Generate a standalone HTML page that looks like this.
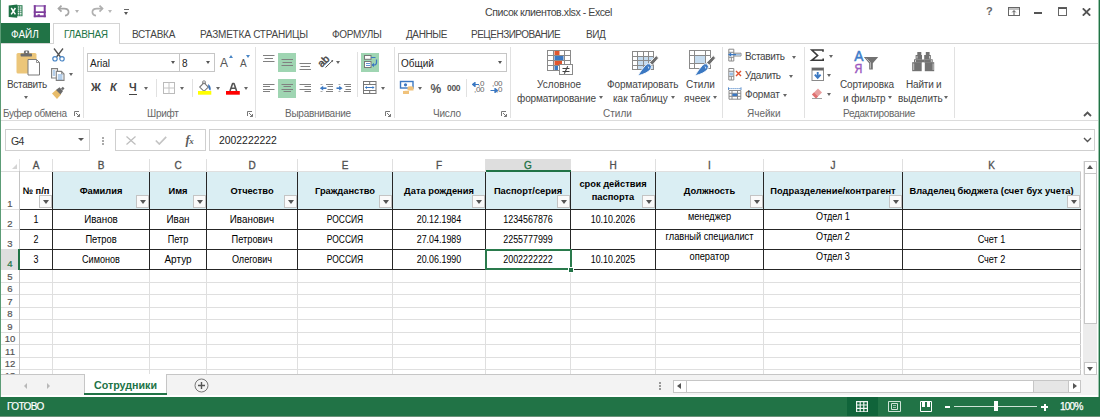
<!DOCTYPE html>
<html><head><meta charset="utf-8">
<style>
*{margin:0;padding:0;box-sizing:border-box}
html,body{width:1100px;height:417px;overflow:hidden;background:#fff;font-family:"Liberation Sans",sans-serif;color:#444}
.a{position:absolute}
.t{position:absolute;white-space:nowrap;line-height:1}
.vs{position:absolute;width:1px;background:#e1e1e1}
.arr{position:absolute;width:0;height:0;border-left:2.5px solid transparent;border-right:2.5px solid transparent;border-top:3px solid #666}
.gl{position:absolute;background:#dfdfdf}
.cell{position:absolute;text-align:center;white-space:nowrap;font-size:9px;color:#000}
.flt{position:absolute;width:13px;height:13px;background:#fafafa;border:1px solid #c4c4c4}
.flt:after{content:"";position:absolute;left:3px;top:4px;border-left:3px solid transparent;border-right:3px solid transparent;border-top:4px solid #555}
</style></head><body>
<!-- window green borders -->
<div class="a" style="left:0;top:0;width:1px;height:397px;background:#5c9c76;z-index:5"></div>
<div class="a" style="left:1098px;top:0;width:1px;height:397px;background:#9cc5ad;z-index:5"></div><div class="a" style="left:1099px;top:0;width:1px;height:397px;background:#217346;z-index:5"></div>

<!-- TITLE BAR -->
<div id="title">
 <!-- excel icon -->
 <svg class="a" style="left:8px;top:4px" width="15" height="14" viewBox="8 4 15 14">
  <rect x="16.5" y="5.2" width="6" height="11" fill="#2a7d50"/>
  <g fill="#e6f0ea">
   <rect x="17.8" y="6.3" width="1.5" height="1.4"/><rect x="20" y="6.3" width="1.5" height="1.4"/>
   <rect x="17.8" y="8.4" width="1.5" height="1.4"/><rect x="20" y="8.4" width="1.5" height="1.4"/>
   <rect x="17.8" y="10.5" width="1.5" height="1.4"/><rect x="20" y="10.5" width="1.5" height="1.4"/>
   <rect x="17.8" y="12.6" width="1.5" height="1.4"/><rect x="20" y="12.6" width="1.5" height="1.4"/>
   <rect x="17.8" y="14.4" width="1.5" height="1"/><rect x="20" y="14.4" width="1.5" height="1"/>
  </g>
  <path d="M8.7 5.4 L17.2 4.5 V17.8 L8.7 16.9 Z" fill="#1e7145"/>
  <path d="M11.2 8 L15.4 14.3 M15.4 8 L11.2 14.3" stroke="#fff" stroke-width="1.5"/>
 </svg>
 <!-- save icon -->
 <svg class="a" style="left:33px;top:5px" width="13" height="13" viewBox="0 0 13 13" fill="#7e3d9c">
  <rect x="0.8" y="0.2" width="12" height="1.5" fill="#9a6bb8"/>
  <rect x="0.8" y="0.2" width="2" height="12"/>
  <rect x="10.7" y="0.2" width="2" height="12"/>
  <rect x="0.8" y="10.3" width="12" height="1.9"/>
  <rect x="0.8" y="6.3" width="12" height="1.7"/>
  <rect x="4.6" y="9.3" width="2.3" height="2"/>
 </svg>
 <!-- undo -->
 <svg class="a" style="left:56px;top:4px" width="16" height="14" viewBox="56 4 16 14">
  <path d="M58.8 8.6H64 Q68.6 8.6 68.6 12 Q68.6 15 65 15.6" fill="none" stroke="#a6a6a6" stroke-width="1.7"/>
  <path d="M61.5 5.6L58.5 8.6L61.5 11.6" fill="none" stroke="#a6a6a6" stroke-width="1.7"/>
 </svg>
 <div class="arr" style="left:75px;top:10px;border-top-color:#b0b0b0"></div>
 <!-- redo -->
 <svg class="a" style="left:90px;top:4px" width="16" height="14" viewBox="90 4 16 14">
  <path d="M102.5 8.6H97 Q92.4 8.6 92.4 12 Q92.4 15 96 15.6" fill="none" stroke="#b0b0b0" stroke-width="1.7"/>
  <path d="M99.5 5.6L102.5 8.6L99.5 11.6" fill="none" stroke="#b0b0b0" stroke-width="1.7"/>
 </svg>
 <div class="arr" style="left:108px;top:10px;border-top-color:#b8b8b8"></div>
 <!-- customize -->
 <div class="a" style="left:123.5px;top:9px;width:5px;height:1.2px;background:#666"></div>
 <div class="arr" style="left:123.5px;top:11.5px;border-left-width:2.5px;border-right-width:2.5px;border-top-width:3px;border-top-color:#555"></div>
 <div class="t" style="left:485px;top:7px;font-size:10.6px;color:#444;letter-spacing:-0.45px">Список клиентов.xlsx - Excel</div>
 <!-- help ? -->
 <div class="t" style="left:986px;top:6px;font-size:11px;font-weight:bold;color:#666">?</div>
 <svg class="a" style="left:1008px;top:7px" width="12" height="9" viewBox="0 0 12 9">
  <rect x="0.5" y="0.5" width="11" height="8" fill="none" stroke="#666" stroke-width="1"/>
  <path d="M1 2H11" stroke="#666" stroke-width="0.8"/>
  <path d="M6 8V3.8M4.3 5.3L6 3.6L7.7 5.3" fill="none" stroke="#555" stroke-width="1"/>
 </svg>
 <div class="a" style="left:1034px;top:12px;width:8px;height:2px;background:#555"></div>
 <svg class="a" style="left:1058px;top:7px" width="9" height="9" viewBox="0 0 9 9">
  <rect x="0.5" y="0.5" width="8" height="8" fill="none" stroke="#666" stroke-width="1"/>
  <rect x="0.5" y="0.5" width="8" height="1.5" fill="#555"/>
 </svg>
 <svg class="a" style="left:1082px;top:8px" width="9" height="8" viewBox="0 0 9 8">
  <path d="M0.8 0.3L8.2 7.7M8.2 0.3L0.8 7.7" stroke="#555" stroke-width="1.8"/>
 </svg>
</div>

<!-- TABS -->
<div id="tabs">
 <div class="a" style="left:0;top:23px;width:50px;height:20px;background:#217346"></div>
 <div class="t" style="left:11px;top:30px;font-size:10px;color:#fff">ФАЙЛ</div>
 <div class="a" style="left:53px;top:23px;width:67px;height:21px;border:1px solid #d4d4d4;border-bottom:none;background:#fff;z-index:2"></div>
 <div class="t" style="left:64px;top:30px;font-size:10px;color:#217346;letter-spacing:-0.3px;z-index:3">ГЛАВНАЯ</div>
 <div class="t" style="left:132px;top:30px;font-size:10px;color:#444;letter-spacing:-0.25px">ВСТАВКА</div>
 <div class="t" style="left:200px;top:30px;font-size:10px;color:#444;letter-spacing:-0.2px">РАЗМЕТКА СТРАНИЦЫ</div>
 <div class="t" style="left:332px;top:30px;font-size:10px;color:#444;letter-spacing:-0.3px">ФОРМУЛЫ</div>
 <div class="t" style="left:406px;top:30px;font-size:10px;color:#444;letter-spacing:-0.4px">ДАННЫЕ</div>
 <div class="t" style="left:471px;top:30px;font-size:10px;color:#444;letter-spacing:-0.5px">РЕЦЕНЗИРОВАНИЕ</div>
 <div class="t" style="left:586px;top:30px;font-size:10px;color:#444;letter-spacing:-0.4px">ВИД</div>
 <div class="a" style="left:0;top:43px;width:1098px;height:1px;background:#d4d4d4"></div>
</div>

<!-- RIBBON -->
<div id="ribbon">
 <div class="a" style="left:1px;top:120px;width:1097px;height:1px;background:#dcdcdc"></div>
 <!-- separators -->
 <div class="vs" style="left:83px;top:47px;height:71px"></div>
 <div class="vs" style="left:255px;top:47px;height:71px"></div>
 <div class="vs" style="left:394px;top:47px;height:71px"></div>
 <div class="vs" style="left:510px;top:47px;height:71px"></div>
 <div class="vs" style="left:722px;top:47px;height:71px"></div>
 <div class="vs" style="left:804px;top:47px;height:71px"></div>
 <div class="vs" style="left:954px;top:47px;height:71px"></div>
 <!-- group labels -->
 <div class="t" style="left:3px;top:109px;font-size:10px;color:#666;letter-spacing:-0.35px">Буфер обмена</div>
 <div class="t" style="left:147px;top:109px;font-size:10px;color:#666;letter-spacing:-0.25px">Шрифт</div>
 <div class="t" style="left:285px;top:109px;font-size:10px;color:#666;letter-spacing:-0.25px">Выравнивание</div>
 <div class="t" style="left:433px;top:109px;font-size:10px;color:#666;letter-spacing:-0.2px">Число</div>
 <div class="t" style="left:603px;top:109px;font-size:10px;color:#666">Стили</div>
 <div class="t" style="left:747px;top:109px;font-size:10px;color:#666">Ячейки</div>
 <div class="t" style="left:843px;top:109px;font-size:10px;color:#666;letter-spacing:-0.3px">Редактирование</div>
 <!-- launchers -->
 <svg class="a" style="left:74px;top:111px" width="6" height="6" viewBox="0 0 6 6"><path d="M0.5 5V0.5H5" fill="none" stroke="#777" stroke-width="1"/><path d="M2 2L5.5 5.5M5.5 3V5.5H3" fill="none" stroke="#777" stroke-width="1"/></svg>
 <svg class="a" style="left:247px;top:111px" width="6" height="6" viewBox="0 0 6 6"><path d="M0.5 5V0.5H5" fill="none" stroke="#777" stroke-width="1"/><path d="M2 2L5.5 5.5M5.5 3V5.5H3" fill="none" stroke="#777" stroke-width="1"/></svg>
 <svg class="a" style="left:385px;top:111px" width="6" height="6" viewBox="0 0 6 6"><path d="M0.5 5V0.5H5" fill="none" stroke="#777" stroke-width="1"/><path d="M2 2L5.5 5.5M5.5 3V5.5H3" fill="none" stroke="#777" stroke-width="1"/></svg>
 <svg class="a" style="left:501px;top:111px" width="6" height="6" viewBox="0 0 6 6"><path d="M0.5 5V0.5H5" fill="none" stroke="#777" stroke-width="1"/><path d="M2 2L5.5 5.5M5.5 3V5.5H3" fill="none" stroke="#777" stroke-width="1"/></svg>

 <!-- CLIPBOARD -->
 <svg class="a" style="left:16px;top:50px" width="25" height="26" viewBox="0 0 25 26">
  <rect x="0.5" y="3" width="20" height="20.5" rx="1.5" fill="#ecc67a"/>
  <rect x="4.6" y="3.6" width="11.4" height="2.8" rx="0.6" fill="#6d6d6d"/>
  <rect x="7.9" y="0.6" width="5.3" height="3.6" rx="1.4" fill="#6d6d6d"/>
  <circle cx="10.55" cy="2.2" r="0.9" fill="#fff"/>
  <path d="M12 9.5 H20.5 L23.5 12.5 V25 H12 Z" fill="#fff" stroke="#7a7a7a" stroke-width="1"/>
  <path d="M20.5 9.5 V12.5 H23.5" fill="none" stroke="#7a7a7a" stroke-width="0.8"/>
 </svg>
 <div class="t" style="left:7px;top:80px;font-size:10px;color:#444;letter-spacing:-0.3px">Вставить</div>
 <div class="arr" style="left:24px;top:96px"></div>
 <!-- scissors -->
 <svg class="a" style="left:52px;top:48px" width="13" height="14" viewBox="0 0 13 14">
  <path d="M2 0.5 L8.5 9 M11 0.5 L4.5 9" stroke="#555" stroke-width="1.3"/>
  <circle cx="3" cy="10.8" r="2.2" fill="none" stroke="#4a86c5" stroke-width="1.2"/>
  <circle cx="10" cy="10.8" r="2.2" fill="none" stroke="#4a86c5" stroke-width="1.2"/>
 </svg>
 <!-- copy -->
 <svg class="a" style="left:50px;top:67px" width="16" height="15" viewBox="50 67 16 15">
  <path d="M51.6 68.6H57.5V78H51.6Z" fill="#fff" stroke="#808080" stroke-width="1.1"/>
  <path d="M52.8 71H55.2M52.8 73H55.2M52.8 75H55.2" stroke="#5b94d0" stroke-width="0.9"/>
  <path d="M56.3 71.4H61.5L64 73.9V80.4H56.3Z" fill="#fff" stroke="#808080" stroke-width="1.1"/>
  <path d="M61.5 71.4V73.9H64" fill="none" stroke="#808080" stroke-width="0.8"/>
  <path d="M57.8 75H62.5M57.8 77H62.5M57.8 79H62.5" stroke="#5b94d0" stroke-width="0.9"/>
 </svg>
 <div class="arr" style="left:69px;top:73px"></div>
 <!-- format painter -->
 <svg class="a" style="left:50px;top:86px" width="16" height="15" viewBox="50 86 16 15">
  <path d="M52 93.5 L56.5 89.5 L61 94.5 L57 99 Z" fill="#e8bc6a"/>
  <path d="M56 90 L59.5 87.3 L63 91 L60.5 94.5 Z" fill="#6a6a6a"/>
  <path d="M61 88.5 L62.8 86.8 L64.5 88.5 L62.8 90.3 Z" fill="#6a6a6a"/>
 </svg>
 <!-- FONT -->
 <div class="a" style="left:87px;top:53px;width:128px;height:19px;border:1px solid #c6c6c6;background:#fff"></div>
 <div class="a" style="left:179px;top:54px;width:1px;height:17px;background:#c6c6c6"></div>
 <div class="t" style="left:90px;top:58.5px;font-size:10px;color:#222">Arial</div>
 <div class="arr" style="left:171px;top:61px;border-top-color:#555"></div>
 <div class="t" style="left:182px;top:58.5px;font-size:10px;color:#222">8</div>
 <div class="arr" style="left:206px;top:61px;border-top-color:#555"></div>
 <div class="t" style="left:220px;top:57px;font-size:12px;color:#555">A</div>
 <div class="a" style="left:229px;top:55px;border-left:2px solid transparent;border-right:2px solid transparent;border-bottom:3px solid #4a86c5"></div>
 <div class="t" style="left:240px;top:59px;font-size:10px;color:#555">A</div>
 <div class="a" style="left:246px;top:55px;border-left:2px solid transparent;border-right:2px solid transparent;border-top:3px solid #4a86c5"></div>
 <div class="t" style="left:91px;top:82px;font-size:11px;font-weight:bold;color:#444">Ж</div>
 <div class="t" style="left:110px;top:82px;font-size:11px;font-weight:bold;font-style:italic;color:#444">К</div>
 <div class="t" style="left:129px;top:82px;font-size:11px;font-weight:bold;color:#444">Ч</div>
 <div class="a" style="left:129px;top:94px;width:8px;height:1px;background:#444"></div>
 <div class="arr" style="left:144px;top:87px"></div>
 <div class="vs" style="left:156px;top:79px;height:18px"></div>
 <svg class="a" style="left:163px;top:82px" width="12" height="12" viewBox="0 0 12 12">
  <rect x="0.5" y="0.5" width="11" height="11" fill="none" stroke="#bbb" stroke-width="1"/>
  <path d="M6 0.5V11.5M0.5 6H11.5" stroke="#c4c4c4" stroke-width="1"/>
 </svg>
 <div class="arr" style="left:180px;top:87px"></div>
 <div class="vs" style="left:192px;top:79px;height:18px"></div>
 <svg class="a" style="left:196px;top:79px" width="50" height="17" viewBox="196 79 50 17">
  <path d="M204 82.8 L208.3 87.1 L204 91.3 L199.7 87.1 Z" fill="#fff" stroke="#777" stroke-width="1.1"/>
  <path d="M202.5 85 V82.2 Q202.5 80.8 204 80.8 Q205.5 80.8 205.5 82.2 V85" fill="none" stroke="#888" stroke-width="1"/>
  <path d="M208 84 Q211.5 86 210.5 90.5 Q209 90 208.5 88 Z" fill="#3b73b9"/>
  <rect x="198" y="91" width="13.3" height="3.7" fill="#ffff00"/>
  <path d="M230 91 L232.6 83.5 H234 L236.6 91 M231.3 88.2 H235.3" fill="none" stroke="#555" stroke-width="1.6" stroke-linejoin="bevel"/>
  <rect x="226" y="91" width="13.8" height="3.7" fill="#ff0000"/>
 </svg>
 <div class="arr" style="left:216px;top:87px"></div>
 <div class="arr" style="left:244px;top:87px"></div>

 <!-- ALIGNMENT -->
 <div class="a" style="left:278px;top:53px;width:18px;height:19px;background:#9fd5b2"></div>
 <div class="a" style="left:278px;top:79px;width:18px;height:19px;background:#9fd5b2"></div>
 <div class="a" style="left:361px;top:53px;width:18px;height:19px;background:#9fd5b2"></div>
 <svg class="a" style="left:262px;top:53px" width="140" height="46" viewBox="262 53 140 46">
  <g stroke="#808080" stroke-width="1">
   <path d="M263 55.5H274.5M264.5 58.5H273M263 61.5H274.5"/>
   <path d="M281.5 59.5H293M282.5 62.5H292M281.5 65.5H293"/>
   <path d="M299.5 63.5H311M300.5 66.5H310M299.5 69.5H311"/>
   <path d="M263 84.5H274.5M263 86.5H270M263 89.5H274.5M263 91.5H270"/>
   <path d="M281.5 84.5H293M283.5 86.5H291M281.5 89.5H293M283.5 91.5H291"/>
   <path d="M299.5 84.5H311M304.5 86.5H311M299.5 89.5H311M304.5 91.5H311"/>
   <path d="M326 84.5H333M327.5 86.5H333M327.5 89.5H333M326 91.5H333"/>
   <path d="M344 84.5H351M345.5 86.5H351M345.5 89.5H351M344 91.5H351"/>
   <path d="M320.5 84.5H322.5M320.5 91.5H322.5M338.5 84.5H340.5M338.5 91.5H340.5" stroke="#aaa"/>
   <path d="M325.5 67.5L333 60.2" stroke="#555"/>
  </g>
  <path d="M319.8 88.2 L323.2 85.8 V90.6 Z" fill="#3b78c2"/><path d="M322.5 88.2H326.5" stroke="#3b78c2" stroke-width="1.6"/>
  <path d="M342.6 88.2 L339.2 85.8 V90.6 Z" fill="#3b78c2"/><path d="M336.5 88.2H340" stroke="#3b78c2" stroke-width="1.6"/>
  <path d="M333.2 60 l-2.2 0.4 l1.8 1.8Z" fill="#666"/>
  <text x="0" y="0" font-family="Liberation Sans" font-size="10.5" fill="#4a4a4a" stroke="#4a4a4a" stroke-width="0.45" transform="translate(321.8 67.8) rotate(-45)">ab</text>
  <g stroke="#777" stroke-width="1" fill="#fff">
   <rect x="364.5" y="55.5" width="6.5" height="3.8"/>
   <rect x="364.5" y="61.5" width="6.5" height="6"/>
   <rect x="363.5" y="81.5" width="12.5" height="12"/>
  </g>
  <path d="M371 57.5H375.5" stroke="#3b78c2" stroke-width="1"/>
  <path d="M366 63.5H370M366 65.5H370" stroke="#3b78c2" stroke-width="0.8"/>
  <path d="M376.5 59.5 V62.5 Q376.5 65 374 65 H372" fill="none" stroke="#3b78c2" stroke-width="1.2"/>
  <path d="M371.5 65 L374 62.8 V67.2Z" fill="#3b78c2"/>
  <path d="M363.5 84.5H376M363.5 90.5H376M369.7 81.5V84.5M369.7 90.5V93.5" stroke="#777" stroke-width="1"/>
  <path d="M365.5 87.5H374" stroke="#3b78c2" stroke-width="1"/>
  <path d="M365 87.5L367 86V89Z M374.5 87.5L372.5 86V89Z" fill="#3b78c2"/>
 </svg>
 <div class="arr" style="left:336px;top:61px"></div>
 <div class="arr" style="left:381px;top:87px"></div>
 <div class="vs" style="left:357px;top:52px;height:45px"></div>

 <!-- NUMBER -->
 <div class="a" style="left:398px;top:53px;width:109px;height:19px;border:1px solid #c6c6c6;background:#fff"></div>
 <div class="t" style="left:401px;top:58.5px;font-size:10px;color:#222">Общий</div>
 <div class="arr" style="left:498px;top:61px;border-top-color:#555"></div>
 <svg class="a" style="left:399px;top:80px" width="16" height="15" viewBox="0 0 16 15">
  <rect x="1.5" y="1.5" width="12.5" height="6.5" fill="none" stroke="#3b78c2" stroke-width="1.4"/>
  <circle cx="6.5" cy="4.8" r="1.6" fill="#3b78c2"/>
  <ellipse cx="11.5" cy="7.5" rx="3" ry="1.3" fill="#f0c27b"/>
  <rect x="8.5" y="7.5" width="6" height="3" fill="#f0c27b"/>
  <ellipse cx="7" cy="12" rx="3" ry="1.3" fill="#f0c27b"/>
  <rect x="4" y="11" width="6" height="3" fill="#f0c27b"/>
 </svg>
 <div class="arr" style="left:418px;top:87px"></div>
 <div class="t" style="left:430.5px;top:82.5px;font-size:12px;font-weight:bold;color:#585858">%</div>
 <div class="t" style="left:447px;top:84px;font-size:8.5px;font-weight:bold;color:#555;letter-spacing:-0.3px">000</div>
 <div class="vs" style="left:466px;top:79px;height:18px"></div>
 <div class="t" style="left:478px;top:80px;font-size:8px;color:#666;letter-spacing:-0.3px">,0</div>
 <div class="t" style="left:474px;top:86px;font-size:8px;color:#666;letter-spacing:-0.3px">,00</div>
 <svg class="a" style="left:472px;top:82px" width="8" height="5" viewBox="0 0 8 5"><path d="M0.5 2.5 L3 0.5 V4.5Z M2.5 2.5H7" fill="#3b78c2" stroke="#3b78c2" stroke-width="1.2"/></svg>
 <div class="t" style="left:492px;top:80px;font-size:8px;color:#666;letter-spacing:-0.3px">,00</div>
 <div class="t" style="left:496px;top:86px;font-size:8px;color:#666;letter-spacing:-0.3px">,0</div>
 <svg class="a" style="left:490px;top:88px" width="8" height="5" viewBox="0 0 8 5"><path d="M7.5 2.5 L5 0.5 V4.5Z M0.5 2.5H5.5" fill="#3b78c2" stroke="#3b78c2" stroke-width="1.2"/></svg>

 <!-- STYLES -->
 <svg class="a" style="left:540px;top:46px" width="180" height="32" viewBox="540 46 180 32">
  <!-- cond fmt -->
  <g fill="none" stroke="#8a8a8a" stroke-width="1">
   <rect x="547.5" y="50.5" width="23" height="20"/>
   <path d="M548 55.5H570.5M548 60.5H570.5M548 65.5H570.5M553.5 50.5V70.5M564.5 50.5V70.5"/>
  </g>
  <rect x="554.5" y="51" width="5" height="4" fill="#e0562e"/>
  <rect x="554.5" y="56" width="9" height="4" fill="#3b78c2"/>
  <rect x="554.5" y="61" width="7.5" height="4" fill="#e0562e"/>
  <rect x="554.5" y="66" width="3.5" height="4" fill="#3b78c2"/>
  <rect x="559.5" y="64.5" width="13" height="10" fill="#fff" stroke="#8a8a8a" stroke-width="1"/>
  <path d="M562.5 68.5H569.5M562.5 71.5H569.5M564.3 73.8L567.7 66.2" stroke="#444" stroke-width="1.1"/>
  <!-- format as table -->
  <rect x="638" y="56.5" width="15.5" height="13" fill="#c5dcf0"/>
  <g fill="none" stroke="#8a8a8a" stroke-width="1">
   <rect x="632.5" y="51.5" width="21" height="18"/>
   <path d="M632.5 56.5H653.5M632.5 60.5H653.5M632.5 65.5H653.5M637.5 51.5V69.5M643.5 51.5V69.5M648.5 51.5V69.5"/>
  </g>
  <path d="M656.2 55.6 L658.6 58 L652.4 65.2 L649.6 62.6 Z" fill="#6d6d6d" stroke="#fff" stroke-width="0.9"/>
  <path d="M649.8 63.8 Q652.6 66.2 650.8 69 Q647.5 73.5 637.8 75.8 Q642 69 645.2 65.6 Q647.6 63 649.8 63.8Z" fill="#3b78c2" stroke="#fff" stroke-width="0.9"/>
  <path d="M647.8 66.5 Q649.2 67.2 648.6 68.4" fill="none" stroke="#fff" stroke-width="0.9"/>
  <!-- cell styles -->
  <rect x="694.5" y="55" width="11" height="9" fill="#c5dcf0"/>
  <g fill="none" stroke="#8a8a8a" stroke-width="1">
   <rect x="689.5" y="50.5" width="21" height="18"/>
   <path d="M689.5 55.5H710.5M689.5 63.5H710.5M694.5 50.5V68.5M705.5 50.5V68.5"/>
  </g>
  <path d="M713.2 55.6 L715.6 58 L709.4 65.2 L706.6 62.6 Z" fill="#6d6d6d" stroke="#fff" stroke-width="0.9"/>
  <path d="M706.8 63.8 Q709.6 66.2 707.8 69 Q704.5 73.5 694.8 75.8 Q699 69 702.2 65.6 Q704.6 63 706.8 63.8Z" fill="#3b78c2" stroke="#fff" stroke-width="0.9"/>
  <path d="M704.8 66.5 Q706.2 67.2 705.6 68.4" fill="none" stroke="#fff" stroke-width="0.9"/>
 </svg>
 <div class="t" style="left:537px;top:80px;font-size:10px;color:#444">Условное</div>
 <div class="t" style="left:517px;top:93.5px;font-size:10px;color:#444;letter-spacing:-0.1px">форматирование</div>
 <div class="arr" style="left:599px;top:96px"></div>
 <div class="t" style="left:607px;top:80px;font-size:10px;color:#444;letter-spacing:-0.1px">Форматировать</div>
 <div class="t" style="left:613px;top:93.5px;font-size:10px;color:#444">как таблицу</div>
 <div class="arr" style="left:670.5px;top:96px"></div>
 <div class="t" style="left:686px;top:80px;font-size:10px;color:#444">Стили</div>
 <div class="t" style="left:684px;top:93.5px;font-size:10px;color:#444">ячеек</div>
 <div class="arr" style="left:712.5px;top:96px"></div>

 <!-- CELLS -->
 <svg class="a" style="left:726px;top:47px" width="18" height="54" viewBox="726 47 18 54">
  <g fill="none" stroke="#8a8a8a" stroke-width="1">
   <path d="M728.8 49.2H733.8V61H728.8Z M728.8 52.3H733.8 M728.8 57.3H733.8 M731.3 57.3V61"/>
   <path d="M733.8 53.2H741V56H733.8"/>
   <path d="M728.8 68.5H733.8V80H728.8Z M728.8 71.3H733.8 M728.8 76.3H733.8 M731.3 76.3V80"/>
   <path d="M729 90.5H740.8V99.2H729Z M729 93.3H740.8M729 96.3H740.8M732 90.5V99.2M737.5 90.5V99.2"/>
  </g>
  <rect x="735" y="54" width="5.5" height="1.4" fill="#9cc0e6"/>
  <path d="M731 54.6H736" stroke="#3b78c2" stroke-width="1.3"/>
  <path d="M728 54.6L731.2 52.4V56.8Z" fill="#3b78c2"/>
  <rect x="729.5" y="72.5" width="3.5" height="3" fill="#9cc0e6"/>
  <path d="M736 71L741 76M741 71L736 76" stroke="#e0502e" stroke-width="1.4"/>
  <rect x="732.3" y="93.6" width="5" height="2.5" fill="#3b78c2"/>
  <path d="M728.5 88.6H741" stroke="#3b78c2" stroke-width="0.9" stroke-dasharray="1.2 0.8"/>
  <path d="M728.5 87.3V90M741 87.3V90" stroke="#3b78c2" stroke-width="0.8"/>
 </svg>
 <div class="t" style="left:745px;top:52px;font-size:10px;color:#444;letter-spacing:-0.35px">Вставить</div>
 <div class="arr" style="left:792px;top:56px"></div>
 <div class="t" style="left:745px;top:71px;font-size:10px;color:#444;letter-spacing:-0.35px">Удалить</div>
 <div class="arr" style="left:789px;top:75px"></div>
 <div class="t" style="left:745px;top:90px;font-size:10px;color:#444;letter-spacing:-0.15px">Формат</div>
 <div class="arr" style="left:783px;top:94px"></div>

 <!-- EDITING -->
 <svg class="a" style="left:808px;top:47px" width="140" height="54" viewBox="808 47 140 54">
  <path d="M823 51.8V50H811.8L817.6 55.5L811.8 60.3H823.2V58.6" fill="none" stroke="#3a3a3a" stroke-width="1.6"/>
  <rect x="812" y="68" width="11.5" height="12.5" fill="#fff" stroke="#8a8a8a" stroke-width="1"/>
  <rect x="812" y="68" width="11.5" height="2.5" fill="#666"/>
  <path d="M817.7 72V77M814.8 74.6L817.7 77.8L820.6 74.6" fill="none" stroke="#3b78c2" stroke-width="1.9"/>
  <path d="M812 94.5 L818 88.5 L822 92.5 L816 98.5 Z" fill="#e8a0a0"/>
  <path d="M812 94.5 L814 92.5 L818 96.5 L816 98.5 Z" fill="#e07070"/>
  <path d="M812 98.5H822" stroke="#888" stroke-width="0.8"/>
  <text x="854.2" y="61.2" font-family="Liberation Sans" font-size="13.8" fill="#3d7cc9" stroke="#3d7cc9" stroke-width="0.5">A</text>
  <text x="0" y="0" font-family="Liberation Sans" font-size="13.5" fill="#9b59c0" stroke="#9b59c0" stroke-width="0.5" transform="translate(854.6 72.8) scale(0.8 1)">Я</text>
  <path d="M863.8 57H878.2L872.8 63.2V69.6H869.2V63.2Z" fill="#727272"/><path d="M866.5 58.5L870.5 62.5V68.5" fill="none" stroke="#c8c8c8" stroke-width="0.8"/>
  <g fill="#727272">
   <rect x="917.3" y="52" width="4" height="3.2"/><rect x="925.8" y="52" width="3.8" height="3.2"/>
   <rect x="915.6" y="55" width="6.4" height="4.5"/><rect x="924.2" y="55" width="6.6" height="4.5"/>
   <rect x="914" y="59.3" width="8" height="3.2"/><rect x="924.2" y="59.3" width="8.5" height="3.2"/>
   <rect x="921.5" y="59.5" width="3" height="2.8"/>
   <rect x="912.2" y="62.2" width="9.5" height="9"/><rect x="924.8" y="62.2" width="9.4" height="9"/>
  </g>
  <g fill="#c8c8c8">
   <rect x="913.2" y="63.5" width="1" height="6.5"/><rect x="932.6" y="63.5" width="1" height="6.5"/>
   <rect x="915" y="60" width="1" height="2"/><rect x="930.8" y="60" width="1" height="2"/>
   <rect x="916.5" y="56" width="1" height="2.5"/><rect x="929" y="56" width="1" height="2.5"/>
  </g>
 </svg>
 <div class="arr" style="left:829px;top:55px"></div>
 <div class="arr" style="left:827px;top:74px"></div>
 <div class="arr" style="left:827px;top:93px"></div>
 <div class="t" style="left:840px;top:80px;font-size:10px;color:#444;letter-spacing:-0.1px">Сортировка</div>
 <div class="t" style="left:843px;top:93.5px;font-size:10px;color:#444">и фильтр</div>
 <div class="arr" style="left:887.5px;top:96px"></div>
 <div class="t" style="left:906px;top:80px;font-size:10px;color:#444;letter-spacing:-0.2px">Найти и</div>
 <div class="t" style="left:898px;top:93.5px;font-size:10px;color:#444">выделить</div>
 <div class="arr" style="left:943.5px;top:96px"></div>
 <!-- collapse ribbon chevron -->
 <svg class="a" style="left:1082.5px;top:110.5px" width="9" height="6" viewBox="0 0 9 6"><path d="M1 5L4.5 1.5L8 5" fill="none" stroke="#555" stroke-width="1.8"/></svg>
</div>

<!-- FORMULA BAR -->
<div id="fbar">
 <div class="a" style="left:5px;top:129px;width:85px;height:22px;border:1px solid #cfcfcf"></div>
 <div class="t" style="left:11px;top:136px;font-size:10.5px;color:#333;letter-spacing:-0.6px">G4</div>
 <div class="arr" style="left:78px;top:138px;border-left-width:3px;border-right-width:3px;border-top-width:3.5px;border-top-color:#555"></div>
 <div class="a" style="left:102px;top:137px;width:1.5px;height:1.5px;background:#aaa"></div>
 <div class="a" style="left:102px;top:140px;width:1.5px;height:1.5px;background:#aaa"></div>
 <div class="a" style="left:102px;top:143px;width:1.5px;height:1.5px;background:#aaa"></div>
 <div class="a" style="left:115px;top:129px;width:91px;height:22px;border:1px solid #cfcfcf"></div>
 <svg class="a" style="left:125.5px;top:136px" width="10" height="9" viewBox="0 0 10 9"><path d="M0.5 0.5L9.5 8.5M9.5 0.5L0.5 8.5" stroke="#bdbdbd" stroke-width="1.2"/></svg>
 <svg class="a" style="left:155px;top:136px" width="12" height="9" viewBox="0 0 12 9"><path d="M0.8 4.5L4.3 8L11.2 0.8" fill="none" stroke="#c4c4c4" stroke-width="1.7"/></svg>
 <div class="t" style="left:185.5px;top:134px;font-size:12.5px;font-weight:bold;font-style:italic;font-family:'Liberation Serif',serif;color:#5a5a5a;letter-spacing:-0.5px">f<span style="font-size:9px">x</span></div>
 <div class="a" style="left:209px;top:129px;width:886px;height:22px;border:1px solid #cfcfcf"></div>
 <div class="t" style="left:219px;top:136px;font-size:10.4px;color:#222">2002222222</div>
 <svg class="a" style="left:1083px;top:137px" width="9" height="6" viewBox="0 0 9 6"><path d="M1 1L4.5 4.5L8 1" fill="none" stroke="#555" stroke-width="1.4"/></svg>
</div>

<!-- GRID -->
<div id="grid">
<div class="a" style="left:1083px;top:161px;width:14px;height:214px;background:#ececec"></div>
<div class="a" style="left:486px;top:159px;width:84px;height:12px;background:#dedede"></div>
<div class="a" style="left:1px;top:250px;width:18px;height:19px;background:#dedede"></div>
<div class="a" style="left:53px;top:172px;width:1028px;height:37px;background:#daeef3"></div>
<div class="gl" style="left:19px;top:159px;width:1px;height:215px"></div>
<div class="gl" style="left:52px;top:159px;width:1px;height:215px"></div>
<div class="gl" style="left:149px;top:159px;width:1px;height:215px"></div>
<div class="gl" style="left:206px;top:159px;width:1px;height:215px"></div>
<div class="gl" style="left:297px;top:159px;width:1px;height:215px"></div>
<div class="gl" style="left:392px;top:159px;width:1px;height:215px"></div>
<div class="gl" style="left:485px;top:159px;width:1px;height:215px"></div>
<div class="gl" style="left:570px;top:159px;width:1px;height:215px"></div>
<div class="gl" style="left:655px;top:159px;width:1px;height:215px"></div>
<div class="gl" style="left:763px;top:159px;width:1px;height:215px"></div>
<div class="gl" style="left:902px;top:159px;width:1px;height:215px"></div>
<div class="gl" style="left:1080px;top:171px;width:1px;height:203px;background:#c8c8c8"></div>
<div class="gl" style="left:1px;top:171px;width:1080px;height:1px"></div>
<div class="gl" style="left:1px;top:209px;width:1080px;height:1px"></div>
<div class="gl" style="left:1px;top:229px;width:1080px;height:1px"></div>
<div class="gl" style="left:1px;top:249px;width:1080px;height:1px"></div>
<div class="gl" style="left:1px;top:269px;width:1080px;height:1px"></div>
<div class="gl" style="left:1px;top:282px;width:1080px;height:1px"></div>
<div class="gl" style="left:1px;top:294px;width:1080px;height:1px"></div>
<div class="gl" style="left:1px;top:307px;width:1080px;height:1px"></div>
<div class="gl" style="left:1px;top:319px;width:1080px;height:1px"></div>
<div class="gl" style="left:1px;top:332px;width:1080px;height:1px"></div>
<div class="gl" style="left:1px;top:344px;width:1080px;height:1px"></div>
<div class="gl" style="left:1px;top:357px;width:1080px;height:1px"></div>
<div class="gl" style="left:1px;top:369px;width:1080px;height:1px"></div>
<div class="a" style="left:52px;top:172px;width:1px;height:98px;background:#262626"></div>
<div class="a" style="left:149px;top:172px;width:1px;height:98px;background:#262626"></div>
<div class="a" style="left:206px;top:172px;width:1px;height:98px;background:#262626"></div>
<div class="a" style="left:297px;top:172px;width:1px;height:98px;background:#262626"></div>
<div class="a" style="left:392px;top:172px;width:1px;height:98px;background:#262626"></div>
<div class="a" style="left:485px;top:172px;width:1px;height:98px;background:#262626"></div>
<div class="a" style="left:570px;top:172px;width:1px;height:98px;background:#262626"></div>
<div class="a" style="left:655px;top:172px;width:1px;height:98px;background:#262626"></div>
<div class="a" style="left:763px;top:172px;width:1px;height:98px;background:#262626"></div>
<div class="a" style="left:902px;top:172px;width:1px;height:98px;background:#262626"></div>
<div class="a" style="left:20px;top:209px;width:1061px;height:1px;background:#262626"></div>
<div class="a" style="left:20px;top:229px;width:1061px;height:1px;background:#262626"></div>
<div class="a" style="left:20px;top:249px;width:1061px;height:1px;background:#262626"></div>
<div class="a" style="left:20px;top:269px;width:1061px;height:1px;background:#262626"></div>
<div class="a" style="left:19px;top:171px;width:1px;height:203px;background:#c4c4c4"></div>
<div class="a" style="left:11.5px;top:163.5px;width:0;height:0;border-left:5px solid transparent;border-bottom:5px solid #d4d4d4"></div>
<div class="t" style="left:20px;top:161px;width:32px;text-align:center;font-size:10px;color:#505050;-webkit-text-stroke:0.3px #505050">A</div>
<div class="t" style="left:53px;top:161px;width:96px;text-align:center;font-size:10px;color:#505050;-webkit-text-stroke:0.3px #505050">B</div>
<div class="t" style="left:150px;top:161px;width:56px;text-align:center;font-size:10px;color:#505050;-webkit-text-stroke:0.3px #505050">C</div>
<div class="t" style="left:207px;top:161px;width:90px;text-align:center;font-size:10px;color:#505050;-webkit-text-stroke:0.3px #505050">D</div>
<div class="t" style="left:298px;top:161px;width:94px;text-align:center;font-size:10px;color:#505050;-webkit-text-stroke:0.3px #505050">E</div>
<div class="t" style="left:393px;top:161px;width:92px;text-align:center;font-size:10px;color:#505050;-webkit-text-stroke:0.3px #505050">F</div>
<div class="t" style="left:486px;top:161px;width:84px;text-align:center;font-size:10px;color:#217346;-webkit-text-stroke:0.3px #217346">G</div>
<div class="t" style="left:571px;top:161px;width:84px;text-align:center;font-size:10px;color:#505050;-webkit-text-stroke:0.3px #505050">H</div>
<div class="t" style="left:656px;top:161px;width:107px;text-align:center;font-size:10px;color:#505050;-webkit-text-stroke:0.3px #505050">I</div>
<div class="t" style="left:764px;top:161px;width:138px;text-align:center;font-size:10px;color:#505050;-webkit-text-stroke:0.3px #505050">J</div>
<div class="t" style="left:903px;top:161px;width:177px;text-align:center;font-size:10px;color:#505050;-webkit-text-stroke:0.3px #505050">K</div>
<div class="t" style="left:1px;top:198.7px;width:18px;text-align:center;font-size:9.5px;color:#555;-webkit-text-stroke:0.2px #555">1</div>
<div class="t" style="left:1px;top:218.7px;width:18px;text-align:center;font-size:9.5px;color:#555;-webkit-text-stroke:0.2px #555">2</div>
<div class="t" style="left:1px;top:238.7px;width:18px;text-align:center;font-size:9.5px;color:#555;-webkit-text-stroke:0.2px #555">3</div>
<div class="t" style="left:1px;top:258.7px;width:18px;text-align:center;font-size:9.5px;color:#217346;-webkit-text-stroke:0.2px #217346">4</div>
<div class="t" style="left:1px;top:271.7px;width:18px;text-align:center;font-size:9.5px;color:#555;-webkit-text-stroke:0.2px #555">5</div>
<div class="t" style="left:1px;top:283.7px;width:18px;text-align:center;font-size:9.5px;color:#555;-webkit-text-stroke:0.2px #555">6</div>
<div class="t" style="left:1px;top:296.7px;width:18px;text-align:center;font-size:9.5px;color:#555;-webkit-text-stroke:0.2px #555">7</div>
<div class="t" style="left:1px;top:308.7px;width:18px;text-align:center;font-size:9.5px;color:#555;-webkit-text-stroke:0.2px #555">8</div>
<div class="t" style="left:1px;top:321.7px;width:18px;text-align:center;font-size:9.5px;color:#555;-webkit-text-stroke:0.2px #555">9</div>
<div class="t" style="left:1px;top:333.7px;width:18px;text-align:center;font-size:9.5px;color:#555;-webkit-text-stroke:0.2px #555">10</div>
<div class="t" style="left:1px;top:346.7px;width:18px;text-align:center;font-size:9.5px;color:#555;-webkit-text-stroke:0.2px #555">11</div>
<div class="t" style="left:1px;top:358.7px;width:18px;text-align:center;font-size:9.5px;color:#555;-webkit-text-stroke:0.2px #555">12</div>
<div class="t" style="left:1px;top:371.2px;width:18px;text-align:center;font-size:9.5px;color:#555;-webkit-text-stroke:0.2px #555">13</div>
</div>
<div id="cells">
<div class="cell" style="left:20px;top:172.5px;width:32px;height:37px;line-height:37px;font-weight:bold;font-size:9.3px;">№ п/п</div>
<div class="cell" style="left:53px;top:172.5px;width:96px;height:37px;line-height:37px;font-weight:bold;font-size:9.3px;">Фамилия</div>
<div class="cell" style="left:150px;top:172.5px;width:56px;height:37px;line-height:37px;font-weight:bold;font-size:9.3px;">Имя</div>
<div class="cell" style="left:207px;top:172.5px;width:90px;height:37px;line-height:37px;font-weight:bold;font-size:9.3px;">Отчество</div>
<div class="cell" style="left:298px;top:172.5px;width:94px;height:37px;line-height:37px;font-weight:bold;font-size:9.3px;">Гражданство</div>
<div class="cell" style="left:393px;top:172.5px;width:92px;height:37px;line-height:37px;font-weight:bold;font-size:9.3px;">Дата рождения</div>
<div class="cell" style="left:486px;top:172.5px;width:84px;height:37px;line-height:37px;font-weight:bold;font-size:9.3px;">Паспорт/серия</div>
<div class="cell" style="left:656px;top:172.5px;width:107px;height:37px;line-height:37px;font-weight:bold;font-size:9.3px;">Должность</div>
<div class="cell" style="left:764px;top:172.5px;width:138px;height:37px;line-height:37px;font-weight:bold;font-size:9.3px;">Подразделение/контрагент</div>
<div class="cell" style="left:903px;top:172.5px;width:177px;height:37px;line-height:37px;font-weight:bold;font-size:9.3px;">Владелец бюджета (счет бух учета)</div>
<div class="cell" style="left:571px;top:178px;width:84px;line-height:13px;font-weight:bold;font-size:9.3px">срок действия<br>паспорта</div>
<div class="cell" style="left:20px;top:210px;width:32px;height:19px;line-height:19px;font-size:10px;transform:scaleX(0.89);">1</div>
<div class="cell" style="left:53px;top:210px;width:96px;height:19px;line-height:19px;font-size:10px;transform:scaleX(0.978);">Иванов</div>
<div class="cell" style="left:150px;top:210px;width:56px;height:19px;line-height:19px;font-size:10px;transform:scaleX(0.988);">Иван</div>
<div class="cell" style="left:207px;top:210px;width:90px;height:19px;line-height:19px;font-size:10px;transform:scaleX(0.984);">Иванович</div>
<div class="cell" style="left:298px;top:210px;width:94px;height:19px;line-height:19px;font-size:10px;transform:scaleX(0.845);">РОССИЯ</div>
<div class="cell" style="left:393px;top:210px;width:92px;height:19px;line-height:19px;font-size:10px;transform:scaleX(0.89);">20.12.1984</div>
<div class="cell" style="left:486px;top:210px;width:84px;height:19px;line-height:19px;font-size:10px;transform:scaleX(0.89);">1234567876</div>
<div class="cell" style="left:571px;top:210px;width:84px;height:19px;line-height:19px;font-size:10px;transform:scaleX(0.89);">10.10.2026</div>
<div class="cell" style="left:656px;top:207px;width:107px;height:19px;line-height:19px;font-size:10px;transform:scaleX(0.92);">менеджер</div>
<div class="cell" style="left:764px;top:207px;width:138px;height:19px;line-height:19px;font-size:10px;transform:scaleX(0.907);">Отдел 1</div>
<div class="cell" style="left:20px;top:230px;width:32px;height:19px;line-height:19px;font-size:10px;transform:scaleX(0.89);">2</div>
<div class="cell" style="left:53px;top:230px;width:96px;height:19px;line-height:19px;font-size:10px;transform:scaleX(0.933);">Петров</div>
<div class="cell" style="left:150px;top:230px;width:56px;height:19px;line-height:19px;font-size:10px;transform:scaleX(0.909);">Петр</div>
<div class="cell" style="left:207px;top:230px;width:90px;height:19px;line-height:19px;font-size:10px;transform:scaleX(0.925);">Петрович</div>
<div class="cell" style="left:298px;top:230px;width:94px;height:19px;line-height:19px;font-size:10px;transform:scaleX(0.845);">РОССИЯ</div>
<div class="cell" style="left:393px;top:230px;width:92px;height:19px;line-height:19px;font-size:10px;transform:scaleX(0.89);">27.04.1989</div>
<div class="cell" style="left:486px;top:230px;width:84px;height:19px;line-height:19px;font-size:10px;transform:scaleX(0.89);">2255777999</div>
<div class="cell" style="left:656px;top:227px;width:107px;height:19px;line-height:19px;font-size:10px;transform:scaleX(0.924);">главный специалист</div>
<div class="cell" style="left:764px;top:227px;width:138px;height:19px;line-height:19px;font-size:10px;transform:scaleX(0.907);">Отдел 2</div>
<div class="cell" style="left:903px;top:230px;width:177px;height:19px;line-height:19px;font-size:10px;transform:scaleX(0.909);">Счет 1</div>
<div class="cell" style="left:20px;top:250px;width:32px;height:19px;line-height:19px;font-size:10px;transform:scaleX(0.89);">3</div>
<div class="cell" style="left:53px;top:250px;width:96px;height:19px;line-height:19px;font-size:10px;transform:scaleX(0.91);">Симонов</div>
<div class="cell" style="left:150px;top:250px;width:56px;height:19px;line-height:19px;font-size:10px;transform:scaleX(1.0);">Артур</div>
<div class="cell" style="left:207px;top:250px;width:90px;height:19px;line-height:19px;font-size:10px;transform:scaleX(0.91);">Олегович</div>
<div class="cell" style="left:298px;top:250px;width:94px;height:19px;line-height:19px;font-size:10px;transform:scaleX(0.845);">РОССИЯ</div>
<div class="cell" style="left:393px;top:250px;width:92px;height:19px;line-height:19px;font-size:10px;transform:scaleX(0.89);">20.06.1990</div>
<div class="cell" style="left:486px;top:250px;width:84px;height:19px;line-height:19px;font-size:10px;transform:scaleX(0.89);">2002222222</div>
<div class="cell" style="left:571px;top:250px;width:84px;height:19px;line-height:19px;font-size:10px;transform:scaleX(0.89);">10.10.2025</div>
<div class="cell" style="left:656px;top:247px;width:107px;height:19px;line-height:19px;font-size:10px;transform:scaleX(0.93);">оператор</div>
<div class="cell" style="left:764px;top:247px;width:138px;height:19px;line-height:19px;font-size:10px;transform:scaleX(0.907);">Отдел 3</div>
<div class="cell" style="left:903px;top:250px;width:177px;height:19px;line-height:19px;font-size:10px;transform:scaleX(0.909);">Счет 2</div>
<div class="flt" style="left:39px;top:195px"></div>
<div class="flt" style="left:136px;top:195px"></div>
<div class="flt" style="left:193px;top:195px"></div>
<div class="flt" style="left:284px;top:195px"></div>
<div class="flt" style="left:379px;top:195px"></div>
<div class="flt" style="left:472px;top:195px"></div>
<div class="flt" style="left:557px;top:195px"></div>
<div class="flt" style="left:642px;top:195px"></div>
<div class="flt" style="left:750px;top:195px"></div>
<div class="flt" style="left:889px;top:195px"></div>
<div class="flt" style="left:1067px;top:195px"></div>
<div class="a" style="left:485px;top:249px;width:87px;height:21px;border:2px solid #2a7a4c"></div>
<div class="a" style="left:568px;top:267px;width:6px;height:6px;background:#217346;border:1px solid #fff"></div>
<div class="a" style="left:486px;top:170px;width:85px;height:2px;background:#217346"></div>
<div class="a" style="left:18px;top:249px;width:2px;height:21px;background:#217346"></div>
</div>

<!-- SHEET TABS -->
<div id="sheettabs">
 <div class="a" style="left:1px;top:374px;width:1097px;height:21px;background:#f3f3f3"></div>
 <div class="a" style="left:1px;top:374px;width:1080px;height:1px;background:#c6c6c6"></div>
 <div class="a" style="left:23.5px;top:383px;border-top:3px solid transparent;border-bottom:3px solid transparent;border-right:3px solid #b8b8b8"></div>
 <div class="a" style="left:47px;top:383px;border-top:3px solid transparent;border-bottom:3px solid transparent;border-left:3px solid #b8b8b8"></div>
 <div class="a" style="left:84px;top:374px;width:83px;height:21px;background:#fff;border-left:1px solid #c6c6c6;border-right:1px solid #c6c6c6"></div>
 <div class="a" style="left:84px;top:393px;width:83px;height:2px;background:#217346"></div>
 <div class="t" style="left:94px;top:380px;font-size:10.7px;font-weight:bold;color:#217346">Сотрудники</div>
 <svg class="a" style="left:194px;top:378px" width="15" height="15" viewBox="0 0 15 15"><circle cx="7.5" cy="7.5" r="6.5" fill="none" stroke="#777" stroke-width="1"/><path d="M7.5 4V11M4 7.5H11" stroke="#555" stroke-width="1.4"/></svg>
 <div class="a" style="left:659px;top:382px;width:1.5px;height:1.5px;background:#999"></div>
 <div class="a" style="left:659px;top:385px;width:1.5px;height:1.5px;background:#999"></div>
 <div class="a" style="left:659px;top:388px;width:1.5px;height:1.5px;background:#999"></div>
 <div class="a" style="left:673px;top:380px;width:408px;height:13px;background:#e6e6e6;border:1px solid #c6c6c6"></div>
 <div class="a" style="left:673px;top:380px;width:14px;height:13px;background:#fff;border:1px solid #c6c6c6"></div>
 <div class="a" style="left:677px;top:383px;border-top:3.5px solid transparent;border-bottom:3.5px solid transparent;border-right:4px solid #555"></div>
 <div class="a" style="left:686px;top:380px;width:348px;height:13px;background:#fff;border:1px solid #c6c6c6"></div>
 <div class="a" style="left:1068px;top:380px;width:13px;height:13px;background:#fff;border:1px solid #c6c6c6"></div>
 <div class="a" style="left:1073px;top:383px;border-top:3.5px solid transparent;border-bottom:3.5px solid transparent;border-left:4px solid #555"></div>
 <!-- vertical scrollbar -->
 <div class="a" style="left:1084px;top:161px;width:13px;height:13px;background:#fff;border:1px solid #c6c6c6"></div>
 <div class="a" style="left:1087px;top:165px;border-left:3.5px solid transparent;border-right:3.5px solid transparent;border-bottom:4px solid #555"></div>
 <div class="a" style="left:1084px;top:173px;width:13px;height:151px;background:#fff;border:1px solid #c6c6c6"></div>
 <div class="a" style="left:1084px;top:362px;width:13px;height:13px;background:#fff;border:1px solid #c6c6c6"></div>
 <div class="a" style="left:1087px;top:367px;border-left:3.5px solid transparent;border-right:3.5px solid transparent;border-top:4px solid #555"></div>
</div>

<!-- STATUS BAR -->
<div id="status">
 <div class="a" style="left:0;top:397px;width:1100px;height:20px;background:#217346"></div>
 <div class="t" style="left:7px;top:402px;font-size:10px;color:#fff;letter-spacing:-0.6px;-webkit-text-stroke:0.2px #fff">ГОТОВО</div>
 <div class="a" style="left:847px;top:397px;width:31px;height:19px;background:#10643a"></div>
 <svg class="a" style="left:856px;top:401px" width="12" height="11" viewBox="0 0 12 11"><path d="M0.6 0.6H11.4V10.9H0.6Z M0.6 4H11.4M0.6 7.4H11.4M4.2 0.6V10.9M7.8 0.6V10.9" fill="none" stroke="#f0f5f2" stroke-width="1.2"/></svg>
 <svg class="a" style="left:888px;top:401px" width="13" height="11" viewBox="0 0 13 11"><path d="M0.5 0.5H12.5V10.5H0.5Z" fill="none" stroke="#cfe3d7" stroke-width="1"/><path d="M3.5 2.5H9.5V8.5H3.5Z" fill="none" stroke="#cfe3d7" stroke-width="1"/><path d="M5 4.5H8M5 6.5H8" stroke="#cfe3d7" stroke-width="0.7"/></svg>
 <svg class="a" style="left:920px;top:401px" width="12" height="11" viewBox="0 0 12 11"><path d="M0.5 0.5H11.5V10.5H0.5Z" fill="none" stroke="#fff" stroke-width="1"/><path d="M2 0.5H5V6H2Z M7 0.5H10V6H7Z" fill="#fff"/></svg>
 <div class="a" style="left:945px;top:406px;width:5px;height:2px;background:#fff"></div>
 <div class="a" style="left:954px;top:406px;width:83px;height:1px;background:#cfe3d7"></div>
 <div class="a" style="left:994px;top:401px;width:4px;height:10px;background:#fff"></div>
 <div class="a" style="left:1041px;top:406px;width:7px;height:2px;background:#fff"></div>
 <div class="a" style="left:1043.5px;top:403.5px;width:2px;height:7px;background:#fff"></div>
 <div class="t" style="left:1060px;top:402px;font-size:10px;color:#fff;letter-spacing:-0.75px;-webkit-text-stroke:0.25px #fff">100%</div>
 <div class="a" style="left:0;top:416px;width:1100px;height:1px;background:#6a9279"></div>
</div>
</body></html>
